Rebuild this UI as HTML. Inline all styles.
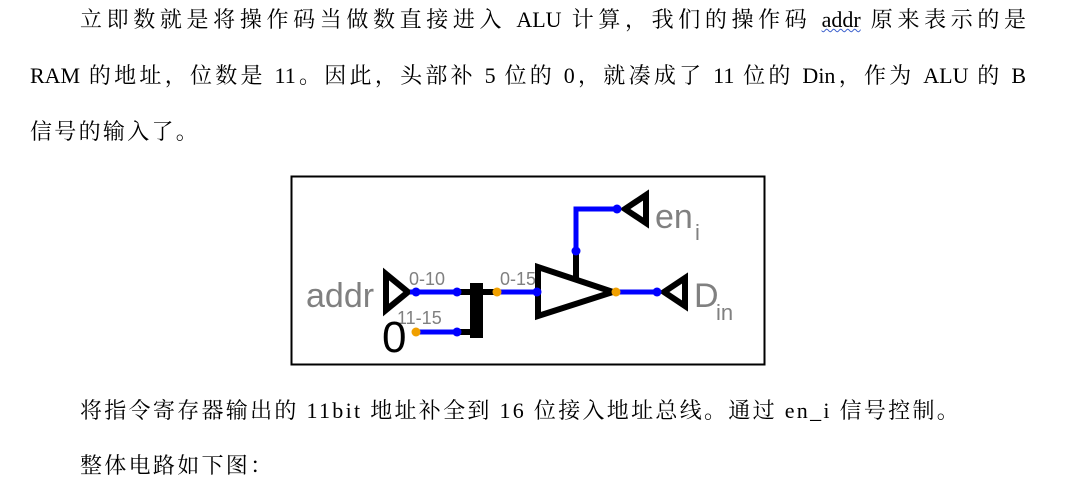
<!DOCTYPE html>
<html><head><meta charset="utf-8"><style>
body{margin:0;width:1068px;height:490px;background:#fff;overflow:hidden;position:relative;font-family:"Liberation Serif","Noto Serif CJK SC","Noto Sans CJK SC",serif;font-size:22px;letter-spacing:2.3px;color:#000}
.l{position:absolute;white-space:nowrap;line-height:26px}
.j{text-align:justify;text-align-last:justify;white-space:normal;letter-spacing:0}
u{text-decoration:underline wavy #3a5fcd;text-decoration-thickness:1px}
svg{letter-spacing:0}
</style></head><body>
<div class="l j" style="left:80px;top:7px;width:946px">立即数就是将操作码当做数直接进入 ALU 计算，我们的操作码 <u>addr</u> 原来表示的是</div>
<div class="l j" style="left:30px;top:63px;width:996px">RAM 的地址，位数是 11。因此，头部补 5 位的 0，就凑成了 11 位的 Din，作为 ALU 的 B</div>
<div class="l" style="left:30px;top:119px">信号的输入了。</div>
<div class="l" style="left:80px;top:398px">将指令寄存器输出的 11bit 地址补全到 16 位接入地址总线。通过 en_i 信号控制。</div>
<div class="l" style="left:80px;top:453px">整体电路如下图：</div>
<svg style="position:absolute;left:0;top:0" width="1068" height="490">
<rect x="291.5" y="176.5" width="473" height="188" fill="none" stroke="#000" stroke-width="2"/>
<g font-family="Liberation Sans,sans-serif" fill="#808080">
<text x="306" y="307" font-size="34">addr</text>
<text x="409" y="285" font-size="18">0-10</text>
<text x="397" y="324" font-size="18">11-15</text>
<text x="500" y="285" font-size="18">0-15</text>
<text x="655" y="228" font-size="34">en</text>
<text x="695" y="240" font-size="22">i</text>
<text x="694" y="307" font-size="34">D</text>
<text x="716" y="320" font-size="22">in</text>
</g>
<text x="382" y="352" font-family="Liberation Sans,sans-serif" font-size="44">0</text>
<g stroke="#000" stroke-width="6" fill="none" stroke-linejoin="miter">
<polygon points="386,274 386,310 408,292"/>
<polygon points="538,267 538,316 613,292"/>
<polygon points="625,209 646,195 646,223"/>
<polygon points="664,292 685,278 685,306"/>
<line x1="457" y1="292" x2="472" y2="292"/>
<line x1="457" y1="332" x2="472" y2="332"/>
<line x1="482" y1="292" x2="498" y2="292"/>
<line x1="576" y1="251" x2="576" y2="278"/>
</g>
<rect x="470" y="283" width="13" height="55" fill="#000"/>
<g stroke="#0000ff" stroke-width="5" fill="none">
<line x1="410" y1="292" x2="457" y2="292"/>
<line x1="416" y1="332" x2="457" y2="332"/>
<line x1="497" y1="292" x2="537" y2="292"/>
<polyline points="576,251 576,209 620,209"/>
<line x1="616" y1="292" x2="660" y2="292"/>
</g>
<g fill="#0000ff">
<circle cx="416" cy="292" r="4.5"/><circle cx="457" cy="292" r="4.5"/>
<circle cx="457" cy="332" r="4.5"/><circle cx="537" cy="292" r="4.5"/>
<circle cx="576" cy="251" r="4.5"/><circle cx="617" cy="209" r="4.5"/>
<circle cx="657" cy="292" r="4.5"/>
</g>
<g fill="#f0a000">
<circle cx="416" cy="332" r="4.5"/><circle cx="497" cy="292" r="4.5"/><circle cx="616" cy="292" r="4.5"/>
</g>
</svg>
</body></html>
